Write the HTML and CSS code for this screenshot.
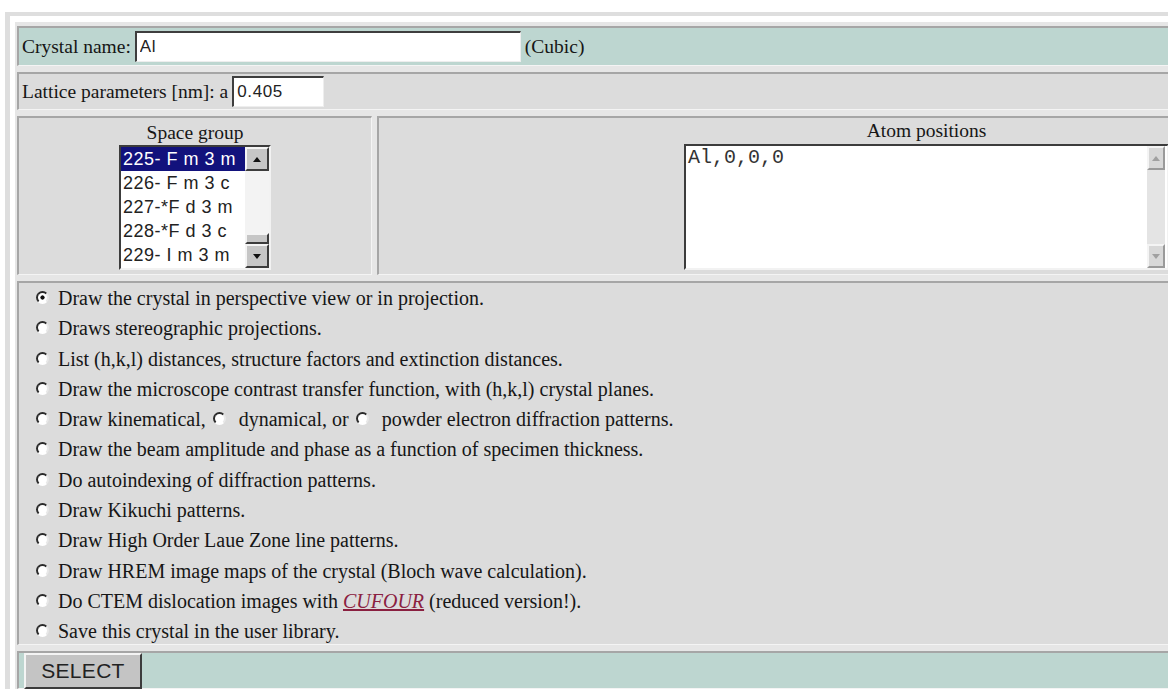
FILE: index.html
```html
<!DOCTYPE html>
<html lang="en">
<head>
<meta charset="utf-8">
<title>Crystal definition</title>
<link rel="stylesheet" href="styles.css">
</head>
<body>
<form class="frame">
  <div class="grid">
    <div class="cell teal span line">
      <label class="lbl" for="cname">Crystal name:</label>
      <input id="cname" class="field name-field" type="text" value="Al">
      <span class="system">(Cubic)</span>
    </div>

    <div class="cell gray span line">
      <label class="lbl" for="lat">Lattice parameters [nm]: a</label>
      <input id="lat" class="field lat-field" type="text" value="0.405">
    </div>

    <div class="cell gray block">
      <div class="head group-head">Space group</div>
      <div class="listbox">
        <ul class="options">
          <li class="sel">225- F m 3 m</li>
          <li>226- F m 3 c</li>
          <li>227-*F d 3 m</li>
          <li>228-*F d 3 c</li>
          <li>229- I m 3 m</li>
        </ul>
        <div class="vscroll">
          <span class="sbtn up"></span>
          <span class="track"><span class="thumb"></span></span>
          <span class="sbtn down"></span>
        </div>
      </div>
    </div>

    <div class="cell gray block">
      <div class="head">Atom positions</div>
      <div class="textbox">
        <textarea spellcheck="false">Al,0,0,0</textarea>
        <div class="vscroll faint">
          <span class="sbtn up"></span>
          <span class="track"></span>
          <span class="sbtn down"></span>
        </div>
      </div>
    </div>

    <div class="cell gray span tasks">
      <label class="opt"><input class="radio" type="radio" name="task" checked>Draw the crystal in perspective view or in projection.</label>
      <label class="opt"><input class="radio" type="radio" name="task">Draws stereographic projections.</label>
      <label class="opt"><input class="radio" type="radio" name="task">List (h,k,l) distances, structure factors and extinction distances.</label>
      <label class="opt"><input class="radio" type="radio" name="task">Draw the microscope contrast transfer function, with (h,k,l) crystal planes.</label>
      <div class="opt"><input class="radio" type="radio" name="task">Draw kinematical, <input class="radio inl" type="radio" name="task">dynamical, or <input class="radio inl" type="radio" name="task">powder electron diffraction patterns.</div>
      <label class="opt"><input class="radio" type="radio" name="task">Draw the beam amplitude and phase as a function of specimen thickness.</label>
      <label class="opt"><input class="radio" type="radio" name="task">Do autoindexing of diffraction patterns.</label>
      <label class="opt"><input class="radio" type="radio" name="task">Draw Kikuchi patterns.</label>
      <label class="opt"><input class="radio" type="radio" name="task">Draw High Order Laue Zone line patterns.</label>
      <label class="opt"><input class="radio" type="radio" name="task">Draw HREM image maps of the crystal (Bloch wave calculation).</label>
      <label class="opt"><input class="radio" type="radio" name="task">Do CTEM dislocation images with <a class="ext" href="#">CUFOUR</a> (reduced version!).</label>
      <label class="opt"><input class="radio" type="radio" name="task">Save this crystal in the user library.</label>
    </div>

    <div class="cell teal span line">
      <button class="submit" type="button">SELECT</button>
    </div>
  </div>
</form>
</body>
</html>
```

FILE: styles.css
```css
html, body {
  margin: 0;
  background: #fff;
  overflow: hidden;
}

body {
  font-family: "Liberation Serif", "Times New Roman", serif;
  font-size: 19.5px;
  color: #161616;
}

/* outer table frame with its bevelled edge */
.frame {
  margin: 12px 0 0 5px;
  width: 1480px;
  border-style: solid;
  border-color: #dedede;
  border-width: 4px 0 0 5px;
  padding: 10px 0 0 7px;
  background: #e6e6e6;
  box-shadow: inset 5px 6px 0 #fff;
}

.grid {
  display: grid;
  width: 1458px;
  grid-template-columns: 355px 1098px;
  grid-template-rows: 40px 38px 159px 364px 38px;
  column-gap: 5px;
  row-gap: 6px;
}

.cell {
  box-sizing: border-box;
  border-style: solid;
  border-width: 2px 1px 1px 2px;
  border-color: #a6a6a6 #f4f4f4 #f4f4f4 #a6a6a6;
}

.span { grid-column: 1 / -1; }

.teal { background: #bdd6d0; }
.gray { background: #dcdcdc; }

.line {
  display: flex;
  align-items: center;
  padding-left: 3px;
  white-space: nowrap;
}

.field {
  box-sizing: border-box;
  height: 31px;
  margin: 0 4px;
  padding: 0 3px;
  border-style: solid;
  border-width: 2px 1px 1px 2px;
  border-color: #3e3e3e #eeeeee #eeeeee #3e3e3e;
  background: #fff;
  font: 17px "Liberation Sans", Arial, sans-serif;
  letter-spacing: 0.6px;
  color: #222;
  outline: none;
}

.name-field { width: 386px; }
.lat-field { width: 92px; }

/* space group and atom cells */
.block {
  display: flex;
  flex-direction: column;
}

.head {
  height: 26px;
  line-height: 26px;
  text-align: center;
}

.group-head { line-height: 30px; }

.listbox {
  display: flex;
  box-sizing: border-box;
  width: 152px;
  height: 125px;
  margin: 1px auto 0;
  border-style: solid;
  border-width: 2px;
  border-color: #3c3c3c #f2f2f2 #f2f2f2 #3c3c3c;
  background: #fff;
}

.options {
  flex: 1;
  list-style: none;
  margin: 0;
  padding: 0;
  font: 18px "Liberation Sans", Arial, sans-serif;
  letter-spacing: 0.5px;
}

.options li {
  height: 24px;
  line-height: 24px;
  padding-left: 2px;
  white-space: pre;
  color: #222;
}

.options li.sel {
  background: #12127c;
  color: #fff;
}

.vscroll {
  display: flex;
  flex-direction: column;
  width: 24px;
  background: #f2f2f2;
}

.sbtn {
  display: flex;
  align-items: center;
  justify-content: center;
  box-sizing: border-box;
  height: 24px;
  background: #c6c6c6;
  border-style: solid;
  border-width: 2px;
  border-color: #f4f4f4 #3c3c3c #3c3c3c #f4f4f4;
}

.sbtn::before {
  content: "";
  border-left: 4px solid transparent;
  border-right: 4px solid transparent;
}

.up::before { border-bottom: 5px solid #111; }
.down::before { border-top: 5px solid #111; }

.track {
  flex: 1;
  display: flex;
  flex-direction: column;
  justify-content: flex-end;
  background: #f3f3f3;
}

.thumb {
  box-sizing: border-box;
  height: 11px;
  background: #c6c6c6;
  border-style: solid;
  border-width: 2px;
  border-color: #f4f4f4 #3c3c3c #3c3c3c #f4f4f4;
}

.textbox {
  display: flex;
  box-sizing: border-box;
  width: 485px;
  height: 126px;
  margin: 0 auto;
  border-style: solid;
  border-width: 2px;
  border-color: #3c3c3c #f2f2f2 #f2f2f2 #3c3c3c;
  background: #fff;
}

.textbox textarea {
  flex: 1;
  border: 0;
  margin: 0;
  padding: 1px 2px 0;
  resize: none;
  outline: none;
  background: transparent;
  font: 20px/22px "Liberation Mono", "Courier New", monospace;
  color: #333;
}

.vscroll.faint {
  width: 18px;
  margin: 0 2px 0 0;
  background: #e2e2e2;
}

.faint .sbtn {
  background: #d8d8d8;
  border-color: #f4f4f4 #9a9a9a #9a9a9a #f4f4f4;
}

.faint .up::before { border-bottom-color: #a0a0a0; }
.faint .down::before { border-top-color: #a0a0a0; }

.faint .track { background: #e4e4e4; }

/* task choices */
.tasks {
  padding-top: 0;
  font-size: 20px;
}

.opt {
  display: block;
  height: 30.3px;
  line-height: 30px;
  padding-left: 16px;
  white-space: nowrap;
}

.radio {
  appearance: none;
  -webkit-appearance: none;
  box-sizing: border-box;
  width: 13px;
  height: 13px;
  margin: 0 9px 0 1px;
  border-radius: 50%;
  border: 2.5px solid;
  border-color: #2a2a2a #e8e8e8 #ffffff #2a2a2a;
  background: #fff;
  vertical-align: 1px;
}

.radio:checked {
  background: radial-gradient(circle, #111 0 1.8px, #fff 2.4px);
}

.radio.inl { margin: 0 13px 0 2px; }

.ext {
  color: #8a2040;
  font-style: italic;
  text-decoration: underline;
}

.submit {
  box-sizing: border-box;
  width: 118px;
  height: 36px;
  margin: 0 0 0 2px;
  padding: 0;
  background: #c4c4c4;
  border-style: solid;
  border-width: 2px;
  border-color: #f4f4f4 #3c3c3c #3c3c3c #f4f4f4;
  font: 21px "Liberation Sans", Arial, sans-serif;
  letter-spacing: 0.3px;
  color: #222;
}
```
